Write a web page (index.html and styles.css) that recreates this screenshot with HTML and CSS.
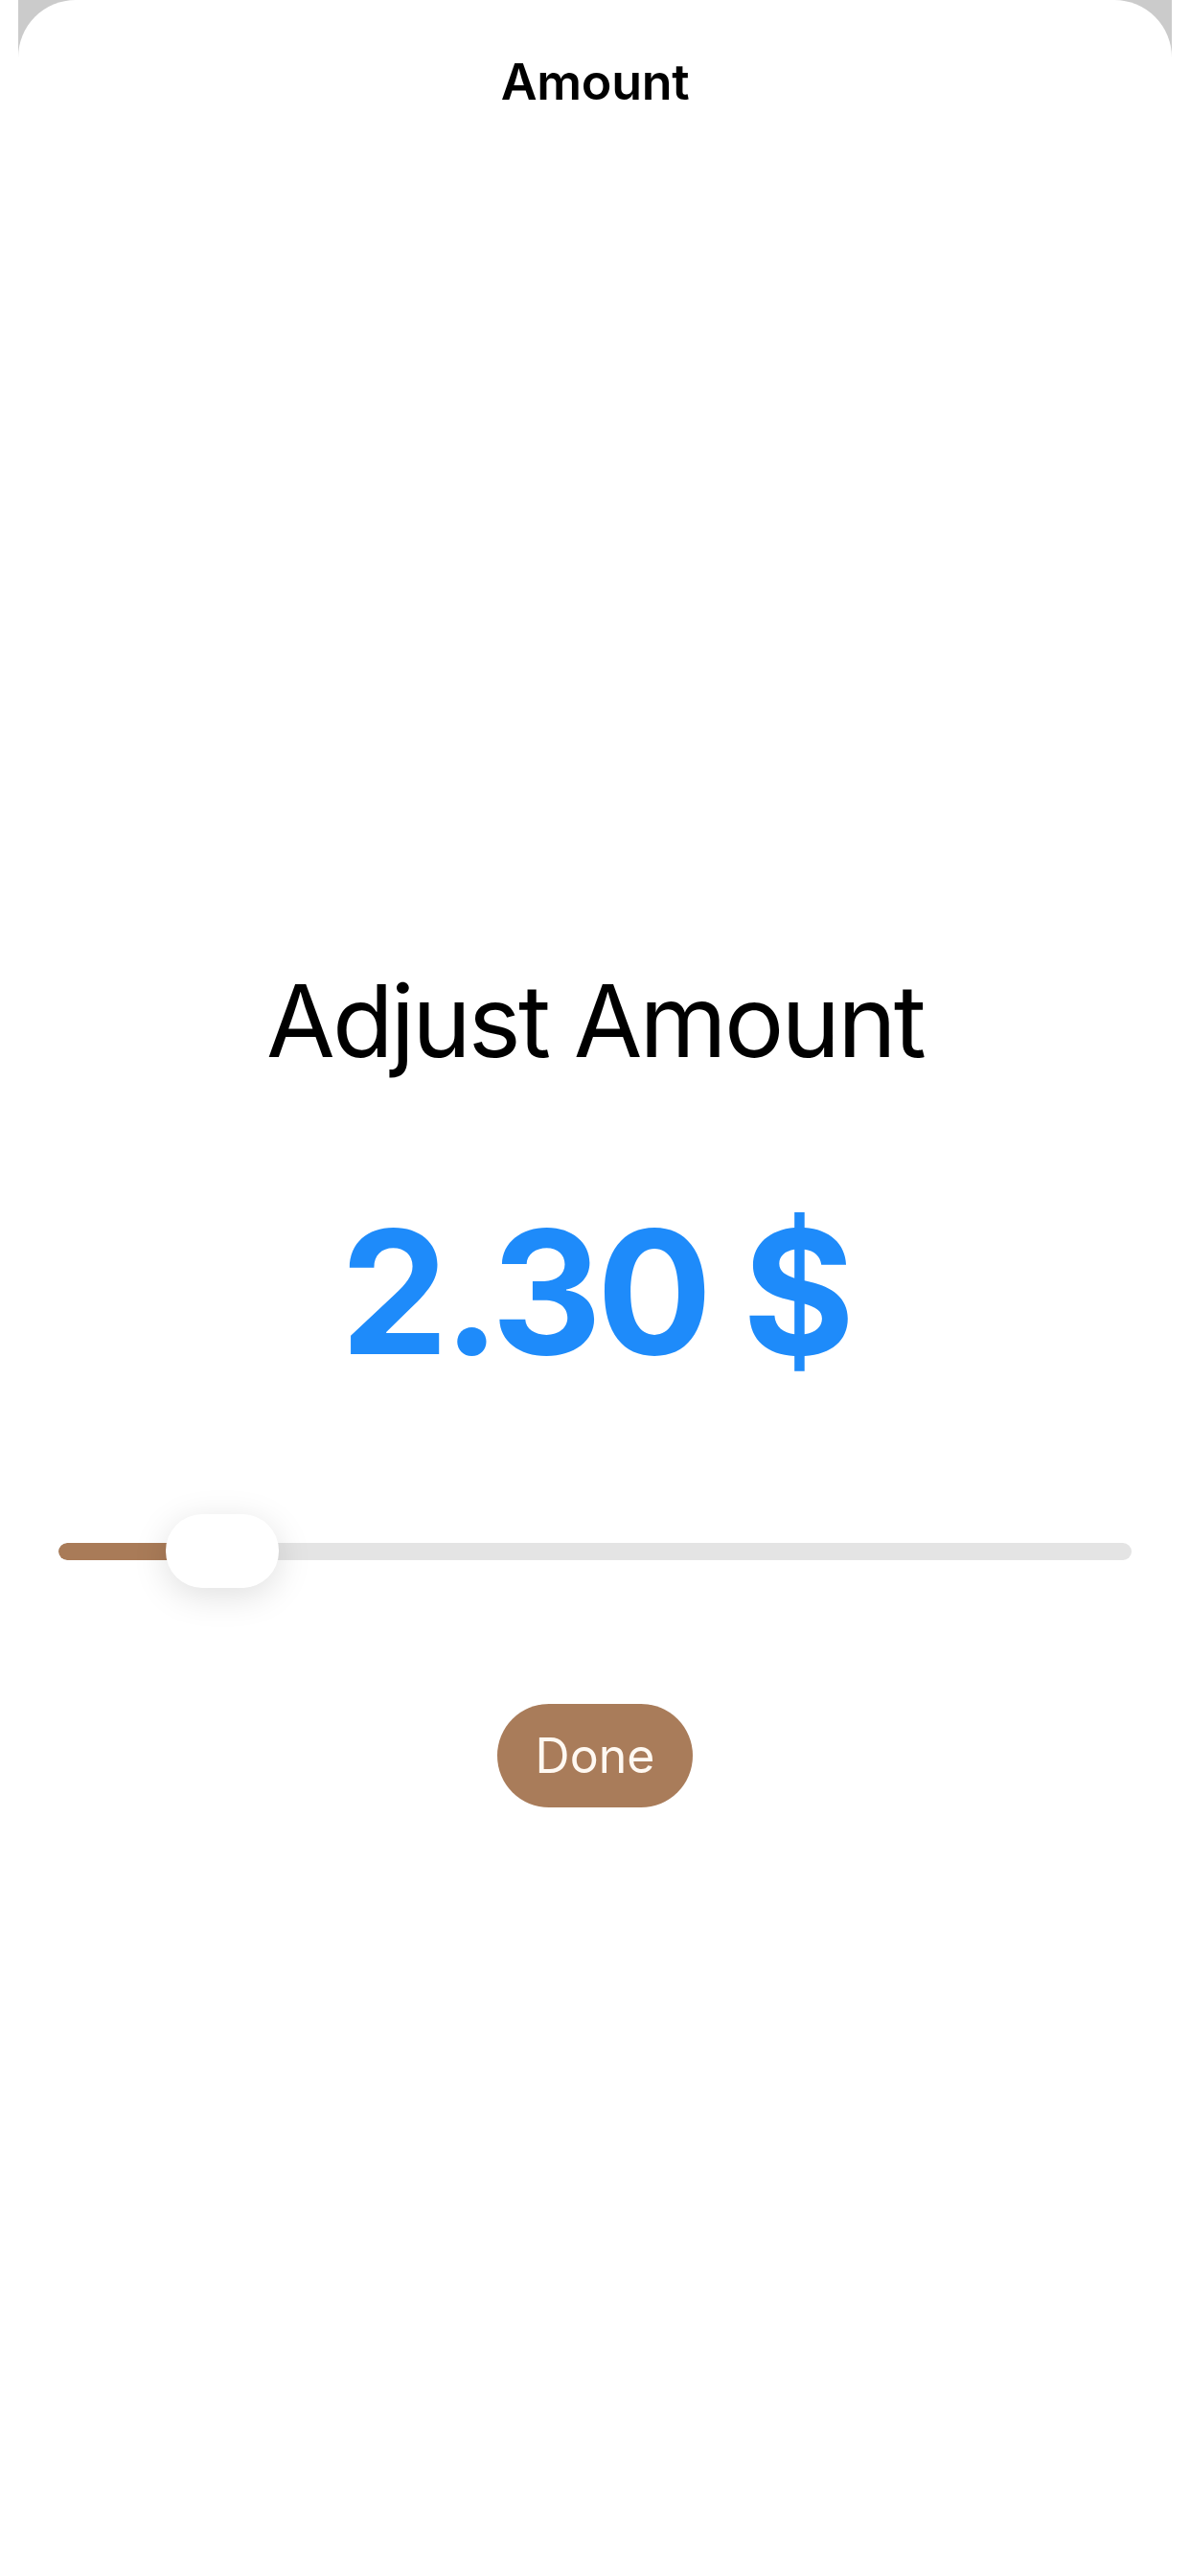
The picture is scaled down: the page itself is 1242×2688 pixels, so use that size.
FILE: index.html
```html
<!DOCTYPE html>
<html>
<head>
    <meta charset="utf-8">
    <title>Amount</title>
    <link rel="stylesheet" href="styles.css">
</head>
<body>
    <div class="backdrop">
        <div class="sheet">

            <div class="navBar">
                <div class="navTitle">Amount</div>
            </div>

            <div class="content">
                <div class="heading">Adjust Amount</div>
                <div class="amountValue">2.30 $</div>

                <div class="slider">
                    <div class="track">
                        <div class="trackFill" style="width: 171px;"></div>
                    </div>
                    <div class="thumb" style="left: 112px;"></div>
                </div>

                <button class="doneButton">Done</button>
            </div>

        </div>
    </div>
</body>
</html>
```

FILE: styles.css
```css
html, body {
	margin: 0;
	padding: 0;
	background-color: #FFFFFF;
}

body {
	font-family: Inter, "Noto Sans", sans-serif;
	color: #000000;
}

.backdrop {
	margin: 0 19px;
	background-color: #CBCBCB;
}

.sheet {
	background-color: #FFFFFF;
	border-radius: 60px 60px 0 0;
	min-height: 2688px;
	display: flex;
	flex-direction: column;
	align-items: center;
}

.navBar {
	padding-top: 60px;
	display: flex;
	justify-content: center;
	width: 100%;
}

.navTitle {
	font-size: 52px;
	line-height: 52px;
	font-weight: 600;
	letter-spacing: -0.3px;
}

.content {
	width: 100%;
	display: flex;
	flex-direction: column;
	align-items: center;
}

.heading {
	margin-top: 901px;
	font-size: 104px;
	line-height: 104px;
	font-weight: 400;
	letter-spacing: -2.8px;
}

.amountValue {
	margin-top: 142px;
	font-size: 179px;
	line-height: 179px;
	font-weight: 700;
	color: #1E8BFA;
	letter-spacing: -5.5px;
}

.slider {
	position: relative;
	margin-top: 142px;
	width: 1120px;
	height: 77px;
	display: flex;
	align-items: center;
}

.track {
	width: 100%;
	height: 18px;
	border-radius: 9px;
	background-color: #E4E4E4;
	overflow: hidden;
}

.trackFill {
	height: 100%;
	background-color: #A97B58;
	border-radius: 9px 0 0 9px;
}

/* thumb sits over the track */
.thumb {
	position: absolute;
	top: 0;
	width: 118px;
	height: 77px;
	border-radius: 38px;
	background-color: #FFFFFF;
	box-shadow: 0 8px 36px rgba(0, 0, 0, 0.13);
}

.doneButton {
	margin-top: 121px;
	width: 204px;
	height: 108px;
	border: none;
	border-radius: 54px;
	background-color: #A97C5A;
	color: #FFF9F2;
	font-family: Inter, "Noto Sans", sans-serif;
	font-size: 50px;
	font-weight: 400;
	padding: 0;
}
```
